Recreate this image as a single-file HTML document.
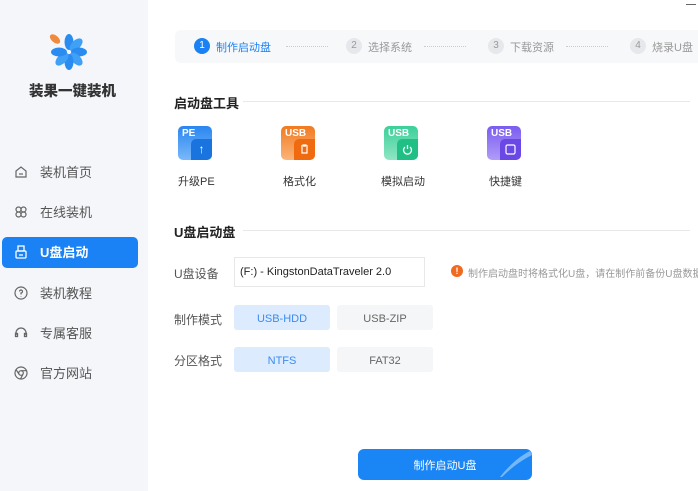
<!DOCTYPE html>
<html><head><meta charset="utf-8"><style>
*{margin:0;padding:0;box-sizing:border-box}
body{width:698px;height:491px;overflow:hidden;background:#fff;font-family:"Liberation Sans","Noto Sans CJK SC",sans-serif;position:relative;color:#333}
.a{position:absolute}
.side{left:0;top:0;width:148px;height:491px;background:#f4f6f9}
.nav{left:2px;width:136px;height:31px;font-size:13px;color:#555;line-height:31px;padding-left:38px}
.nav svg{position:absolute;left:12px;top:8px}
.act{background:#1a82f4;color:#fff;border-radius:5px;font-weight:bold}
.steps{left:175px;top:30px;width:530px;height:33px;background:#f7f8fa;border-radius:6px}
.sc{width:16px;height:16px;border-radius:50%;background:#e6e8ec;color:#999;font-size:10px;text-align:center;line-height:16px;top:38px}
.st{top:39px;font-size:11px;color:#999}
.dot{top:46px;width:42px;border-top:1px dotted #ccc}
.h{font-size:13px;font-weight:bold;color:#222}
.ln{height:1px;background:#e8e8e8}
.ic{width:34px;height:34px;border-radius:5px;top:126px}
.ic b{position:absolute;left:4px;top:2px;color:#fff;font-size:10px;font-weight:bold}
.ic i{position:absolute;right:0;bottom:0;width:21px;height:21px;border-radius:5px 0 5px 0}
.lb{top:173px;font-size:11px;color:#333}
.fl{font-size:12px;color:#555}
.bt{width:96px;height:25px;border-radius:3px;text-align:center;line-height:28px;font-size:11px}
.on{background:#dcebfd;color:#3b8cf0}.off{background:#f5f6f8;color:#666}
</style></head><body>
<div class="a side"></div>
<svg class="a" style="left:48px;top:30px" width="42" height="42" viewBox="0 0 42 42">
<g fill="#2a8cf0" transform="translate(21,22)">
<ellipse rx="4.5" ry="8" transform="rotate(0) translate(0,-10)"/>
<ellipse rx="4.5" ry="8" transform="rotate(45) translate(0,-10)" fill="#3fa0f5"/>
<ellipse rx="4.5" ry="8" transform="rotate(90) translate(0,-10)"/>
<ellipse rx="4.5" ry="8" transform="rotate(135) translate(0,-10)" fill="#3fa0f5"/>
<ellipse rx="4.5" ry="8" transform="rotate(180) translate(0,-10)"/>
<ellipse rx="4.5" ry="8" transform="rotate(225) translate(0,-10)" fill="#3fa0f5"/>
<ellipse rx="4.5" ry="8" transform="rotate(270) translate(0,-10)"/>
</g>
<ellipse cx="7" cy="9" rx="3.5" ry="6" transform="rotate(-50 7 9)" fill="#f08a3c"/>
</svg>
<div class="a" style="left:29px;top:80px;font-size:14.5px;font-weight:900;color:#333">装果一键装机</div>
<div class="a nav" style="top:157px"><svg width="14" height="14" viewBox="0 0 14 14" fill="none" stroke="#666" stroke-width="1.2"><path d="M2 6L7 2l5 4v6H2z"/><path d="M5 9h4"/></svg>装机首页</div>
<div class="a nav" style="top:197px"><svg width="14" height="14" viewBox="0 0 14 14" fill="none" stroke="#666" stroke-width="1.2"><circle cx="4.5" cy="4.5" r="2.5"/><circle cx="9.5" cy="4.5" r="2.5"/><circle cx="4.5" cy="9.5" r="2.5"/><circle cx="9.5" cy="9.5" r="2.5"/></svg>在线装机</div>
<div class="a nav act" style="top:237px"><svg width="14" height="14" viewBox="0 0 14 14" fill="none" stroke="#fff" stroke-width="1.3"><rect x="4" y="1" width="6" height="5"/><rect x="2" y="6" width="10" height="7" rx="1"/><path d="M5 10h4"/></svg>U盘启动</div>
<div class="a nav" style="top:278px"><svg width="14" height="14" viewBox="0 0 14 14" fill="none" stroke="#666" stroke-width="1.2"><circle cx="7" cy="7" r="6"/><path d="M5.5 5.5a1.5 1.5 0 1 1 1.5 1.5v1.5M7 10v.5"/></svg>装机教程</div>
<div class="a nav" style="top:318px"><svg width="14" height="14" viewBox="0 0 14 14" fill="none" stroke="#666" stroke-width="1.3"><path d="M2 9V7a5 5 0 0 1 10 0v2"/><rect x="1.5" y="7.5" width="2" height="3"/><rect x="10.5" y="7.5" width="2" height="3"/></svg>专属客服</div>
<div class="a nav" style="top:358px"><svg width="14" height="14" viewBox="0 0 14 14" fill="none" stroke="#666" stroke-width="1.2"><circle cx="7" cy="7" r="6"/><circle cx="7" cy="7" r="2.3"/><path d="M7 4.7h5.5M5 8.2L2.2 3.8M9 8.2L6.5 12.9"/></svg>官方网站</div>

<div class="a" style="left:686px;top:4px;width:10px;border-top:1px solid #666"></div>
<div class="a steps"></div>
<div class="a sc" style="left:194px;background:#1a82f4;color:#fff">1</div>
<div class="a st" style="left:216px;color:#1a82f4">制作启动盘</div>
<div class="a dot" style="left:286px"></div>
<div class="a sc" style="left:346px">2</div><div class="a st" style="left:368px">选择系统</div>
<div class="a dot" style="left:424px"></div>
<div class="a sc" style="left:488px">3</div><div class="a st" style="left:510px">下载资源</div>
<div class="a dot" style="left:566px"></div>
<div class="a sc" style="left:630px">4</div><div class="a st" style="left:652px">烧录U盘</div>

<div class="a h" style="left:174px;top:93px">启动盘工具</div>
<div class="a ln" style="left:243px;top:101px;width:447px"></div>
<div class="a ic" style="left:178px;background:linear-gradient(#2a86f0,#7ab8fa)"><b>PE</b><i style="background:#1a74e0;color:#fff;font-style:normal;font-size:12px;text-align:center;line-height:21px">↑</i></div>
<div class="a ic" style="left:281px;background:linear-gradient(#f07a20,#fbb47a)"><b>USB</b><i style="background:#f06a10"><svg width="21" height="21"><path d="M7 7h7M9 7V6h3v1M8 8v6h5V8" fill="none" stroke="#fff" stroke-width="1.2"/></svg></i></div>
<div class="a ic" style="left:384px;background:linear-gradient(#3ccf9a,#8fe6c3)"><b>USB</b><i style="background:#20bf85"><svg width="21" height="21"><path d="M8 8a4 4 0 1 0 5 0M10.5 6v4" fill="none" stroke="#fff" stroke-width="1.3"/></svg></i></div>
<div class="a ic" style="left:487px;background:linear-gradient(#7a5cf0,#b09cf8)"><b>USB</b><i style="background:#6a48e6"><svg width="21" height="21"><rect x="6" y="6" width="9" height="9" rx="1.5" fill="none" stroke="#fff" stroke-width="1.2"/></svg></i></div>
<div class="a lb" style="left:178px">升级PE</div>
<div class="a lb" style="left:283px">格式化</div>
<div class="a lb" style="left:381px">模拟启动</div>
<div class="a lb" style="left:489px">快捷键</div>

<div class="a h" style="left:174px;top:222px">U盘启动盘</div>
<div class="a ln" style="left:243px;top:230px;width:447px"></div>
<div class="a fl" style="left:174px;top:265px">U盘设备</div>
<div class="a" style="left:234px;top:257px;width:191px;height:30px;border:1px solid #e8e8e8;font-size:11px;line-height:28px;padding-left:5px;color:#222">(F:) - KingstonDataTraveler 2.0</div>
<div class="a" style="left:451px;top:265px;width:12px;height:12px;border-radius:50%;background:#f06a20;color:#fff;font-size:9px;text-align:center;line-height:12px;font-weight:bold">!</div>
<div class="a" style="left:468px;top:265px;font-size:10px;color:#999;white-space:nowrap">制作启动盘时将格式化U盘，请在制作前备份U盘数据</div>
<div class="a fl" style="left:174px;top:311px">制作模式</div>
<div class="a bt on" style="left:234px;top:305px">USB-HDD</div>
<div class="a bt off" style="left:337px;top:305px">USB-ZIP</div>
<div class="a fl" style="left:174px;top:352px">分区格式</div>
<div class="a bt on" style="left:234px;top:347px">NTFS</div>
<div class="a bt off" style="left:337px;top:347px">FAT32</div>

<div class="a" style="left:358px;top:449px;width:174px;height:31px;background:#1a85f5;border-radius:6px;color:#fff;font-size:11px;text-align:center;line-height:35px;overflow:hidden">制作启动U盘
<svg style="position:absolute;right:0;top:0" width="40" height="31"><path d="M8 28C16 18 26 8 38 2L40 6C28 12 18 20 10 28Z" fill="#8cc4fb" opacity=".8"/></svg></div>
</body></html>
